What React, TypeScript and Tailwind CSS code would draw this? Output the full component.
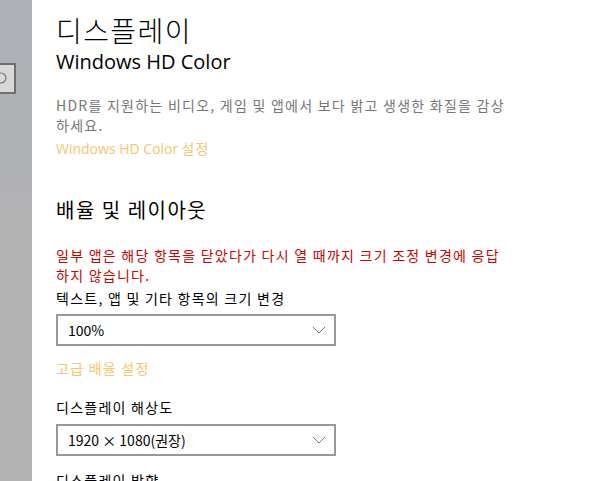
const font = { fontFamily: '"Open Sans", "Noto Sans CJK KR", sans-serif' }

function Dropdown({ value }: { value: string }) {
  return (
    <div className="flex h-8 w-[280px] items-center justify-between border-2 border-[#999999] bg-white pl-[10px] pr-[8px]">
      <span className="text-[14px] leading-5 text-black">{value}</span>
      <svg width="14" height="8" viewBox="0 0 14 8" fill="none" stroke="#7a7a7a" strokeWidth="1">
        <path d="M0.8 0.8 L7 7 L13.2 0.8" />
      </svg>
    </div>
  )
}

export default function App() {
  return (
    <div
      className="flex h-[481px] w-[604px] overflow-hidden bg-white"
      style={{ fontFamily: '"Noto Sans CJK KR", "Open Sans", sans-serif' }}
    >
      {/* side nav edge */}
      <div className="relative w-8 shrink-0 overflow-hidden bg-gradient-to-b from-[#aeb1b7] via-[#b2b2b3] to-[#b3b3b3]">
        <div className="absolute left-[-100px] top-[63px] flex h-[31px] w-[116px] items-center justify-end border-2 border-[#6e6e6e] bg-[#d8d8d8] pr-[7px]">
          <svg width="14" height="14" viewBox="0 0 14 14" fill="none" stroke="#777777" strokeWidth="1.2">
            <circle cx="8" cy="6" r="5" />
            <path d="M4.5 9.5 L0.5 13.5" />
          </svg>
        </div>
      </div>

      <div className="flex flex-col pl-6 pt-3">
        <h1 className="text-[28px] font-light leading-9 tracking-[1.4px] text-black">디스플레이</h1>
        <h2 className="text-[20px] leading-7 text-black" style={font}>
          Windows HD Color
        </h2>
        <p className="mt-[19px] w-[452px] text-[14px] leading-5 tracking-[1.25px] text-[#767676]">
          HDR를 지원하는 비디오, 게임 및 앱에서 보다 밝고 생생한 화질을 감상하세요.
        </p>
        <a className="mt-[3px] text-[14px] leading-5 text-[#f7c46f]">
          <span style={font}>Windows HD Color</span> <span className="tracking-[1.25px]">설정</span>
        </a>

        <h2 className="mt-[37px] text-[20px] leading-7 tracking-[1.5px] text-black">배율 및 레이아웃</h2>
        <p className="mt-[21px] w-[452px] text-[14px] leading-5 tracking-[1.25px] text-[#c50500]">
          일부 앱은 해당 항목을 닫았다가 다시 열 때까지 크기 조정 변경에 응답하지 않습니다.
        </p>
        <p className="mt-[3px] text-[14px] leading-5 tracking-[1.25px] text-black">
          텍스트, 앱 및 기타 항목의 크기 변경
        </p>
        <div className="mt-[6px]">
          <Dropdown value="100%" />
        </div>
        <a className="mt-3 text-[14px] leading-5 tracking-[1.25px] text-[#f7c46f]">고급 배율 설정</a>

        <p className="mt-[19px] text-[14px] leading-5 tracking-[1.25px] text-black">디스플레이 해상도</p>
        <div className="mt-[7px]">
          <Dropdown value="1920 × 1080(권장)" />
        </div>
        <p className="mt-[14px] text-[14px] leading-5 tracking-[1.25px] text-black">디스플레이 방향</p>
      </div>
    </div>
  )
}
